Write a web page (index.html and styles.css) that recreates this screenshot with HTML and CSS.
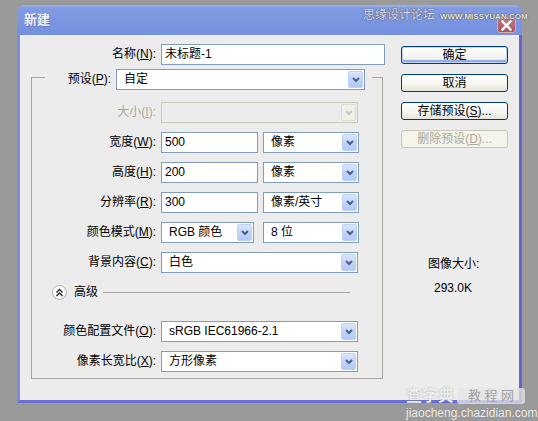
FILE: index.html
```html
<!DOCTYPE html>
<html lang="zh-CN">
<head>
<meta charset="utf-8">
<title>新建</title>
<link rel="stylesheet" href="styles.css">
</head>
<body>
<div class="window">
  <div class="titlebar">
    <span class="title">新建</span>
    <div class="close">
      <svg width="11" height="11" viewBox="0 0 11 11"><path d="M1.5 1.5 L9.5 9.5 M9.5 1.5 L1.5 9.5" stroke="#fff" stroke-width="2.4" stroke-linecap="square"/></svg>
    </div>
  </div>
  <div class="frame">
    <div class="left">
      <div class="row">
        <span class="lbl lbl-name">名称(<u>N</u>):</span>
        <div class="input w-name">未标题-1</div>
      </div>
      <div class="group">
        <div class="ghead">
          <div class="seg-l"></div>
          <span class="lbl lbl-preset">预设(<u>P</u>):</span>
          <div class="select w-preset"><span class="txt">自定</span><span class="arrow"><svg width="8" height="6" viewBox="0 0 8 6"><path d="M1 1 L4 4 L7 1" fill="none" stroke="#4d6185" stroke-width="2"/></svg></span></div>
          <div class="seg-r"></div>
        </div>
        <div class="gbody">
          <div class="grow">
            <span class="glbl disabled">大小(<u>I</u>):</span>
            <div class="select w-full off"><span class="txt"></span><span class="arrow"><svg width="8" height="6" viewBox="0 0 8 6"><path d="M1 1 L4 4 L7 1" fill="none" stroke="#c9c7ba" stroke-width="2"/></svg></span></div>
          </div>
          <div class="grow">
            <span class="glbl">宽度(<u>W</u>):</span>
            <div class="input w-num">500</div>
            <div class="select w-unit gap5"><span class="txt">像素</span><span class="arrow"><svg width="8" height="6" viewBox="0 0 8 6"><path d="M1 1 L4 4 L7 1" fill="none" stroke="#4d6185" stroke-width="2"/></svg></span></div>
          </div>
          <div class="grow">
            <span class="glbl">高度(<u>H</u>):</span>
            <div class="input w-num">200</div>
            <div class="select w-unit gap5"><span class="txt">像素</span><span class="arrow"><svg width="8" height="6" viewBox="0 0 8 6"><path d="M1 1 L4 4 L7 1" fill="none" stroke="#4d6185" stroke-width="2"/></svg></span></div>
          </div>
          <div class="grow">
            <span class="glbl">分辨率(<u>R</u>):</span>
            <div class="input w-num">300</div>
            <div class="select w-unit gap5"><span class="txt">像素/英寸</span><span class="arrow"><svg width="8" height="6" viewBox="0 0 8 6"><path d="M1 1 L4 4 L7 1" fill="none" stroke="#4d6185" stroke-width="2"/></svg></span></div>
          </div>
          <div class="grow">
            <span class="glbl">颜色模式(<u>M</u>):</span>
            <div class="select w-mode"><span class="txt">RGB 颜色</span><span class="arrow"><svg width="8" height="6" viewBox="0 0 8 6"><path d="M1 1 L4 4 L7 1" fill="none" stroke="#4d6185" stroke-width="2"/></svg></span></div>
            <div class="select w-unit gap9"><span class="txt">8 位</span><span class="arrow"><svg width="8" height="6" viewBox="0 0 8 6"><path d="M1 1 L4 4 L7 1" fill="none" stroke="#4d6185" stroke-width="2"/></svg></span></div>
          </div>
          <div class="grow">
            <span class="glbl">背景内容(<u>C</u>):</span>
            <div class="select w-full"><span class="txt">白色</span><span class="arrow"><svg width="8" height="6" viewBox="0 0 8 6"><path d="M1 1 L4 4 L7 1" fill="none" stroke="#4d6185" stroke-width="2"/></svg></span></div>
          </div>
          <div class="adv">
            <span class="circle"><svg width="9" height="9" viewBox="0 0 9 9"><path d="M1.5 4.5 L4.5 1.5 L7.5 4.5 M1.5 8 L4.5 5 L7.5 8" fill="none" stroke="#222" stroke-width="1.4"/></svg></span>
            <span class="advtxt">高级</span>
            <span class="advline"></span>
          </div>
          <div class="grow">
            <span class="glbl">颜色配置文件(<u>O</u>):</span>
            <div class="select w-full"><span class="txt">sRGB IEC61966-2.1</span><span class="arrow"><svg width="8" height="6" viewBox="0 0 8 6"><path d="M1 1 L4 4 L7 1" fill="none" stroke="#4d6185" stroke-width="2"/></svg></span></div>
          </div>
          <div class="grow last">
            <span class="glbl">像素长宽比(<u>X</u>):</span>
            <div class="select w-full"><span class="txt">方形像素</span><span class="arrow"><svg width="8" height="6" viewBox="0 0 8 6"><path d="M1 1 L4 4 L7 1" fill="none" stroke="#4d6185" stroke-width="2"/></svg></span></div>
          </div>
        </div>
      </div>
    </div>
    <div class="right">
      <div class="btn default">确定</div>
      <div class="btn">取消</div>
      <div class="btn">存储预设(<u>S</u>)...</div>
      <div class="btn disabled">删除预设(<u>D</u>)...</div>
      <div class="info1">图像大小:</div>
      <div class="info2">293.0K</div>
    </div>
  </div>
</div>
<div class="wm-top"><span class="wm-cn">思缘设计论坛</span><span class="wm-en">WWW.MISSYUAN.COM</span></div>
<div class="wm-bot">
  <div class="wm-line1"><span class="wm-czd">查字典</span><span class="wm-box">教 程 网</span></div>
  <div class="wm-url">jiaocheng.chazidian.com</div>
</div>
</body>
</html>
```

FILE: styles.css
```css
html, body {
  margin: 0;
  padding: 0;
}
body {
  width: 538px;
  height: 421px;
  overflow: hidden;
  position: relative;
  background: #9a9a9a;
  font-family: "Liberation Sans", "Noto Sans CJK SC", sans-serif;
  font-size: 12px;
  color: #000;
}
u { text-decoration: underline; text-underline-offset: 1px; }

.window {
  margin: 5px 0 0 17px;
  width: 505px;
  height: 398px;
  display: flex;
  flex-direction: column;
}
.titlebar {
  height: 30px;
  flex: none;
  border-radius: 8px 8px 0 0;
  background: linear-gradient(#9db2ef 0, #829be3 3px, #7a95e0 60%, #7590dd 100%);
  display: flex;
  align-items: flex-start;
}
.title {
  align-self: center;
  margin-left: 7px;
  color: #eaf0fc;
  font-weight: bold;
  font-size: 13px;
  line-height: 14px;
  text-shadow: 1px 1px 0 #6478c4;
}
.close {
  margin: 12px 6px 0 auto;
  width: 19px;
  height: 16px;
  box-sizing: border-box;
  border: 1px solid #d7a9b0;
  border-radius: 3px;
  background: linear-gradient(#c27a84, #a9545f);
  display: flex;
  align-items: center;
  justify-content: center;
}
.frame {
  flex: 1;
  display: flex;
  background: #ececec;
  border-left: 3px solid #7a8ce0;
  border-right: 3px solid #6464cc;
  border-bottom: 3px solid #6a6ed4;
}

.left {
  width: 365px;
  padding-top: 9px;
}
.row {
  display: flex;
  align-items: center;
  height: 21px;
}
.lbl {
  text-align: right;
  white-space: nowrap;
  line-height: 21px;
}
.lbl-name { width: 136px; margin-right: 5px; }

.input {
  height: 21px;
  box-sizing: border-box;
  border: 1px solid #7f9db9;
  background: #fff;
  padding-left: 3px;
  line-height: 19px;
  white-space: nowrap;
}
.w-name { width: 224px; }
.w-num { width: 97px; }

.select {
  height: 21px;
  box-sizing: border-box;
  border: 1px solid #7f9db9;
  background: #fff;
  display: flex;
  align-items: center;
  padding-left: 7px;
}
.select .txt {
  flex: 1;
  white-space: nowrap;
  line-height: 19px;
}
.select .arrow {
  width: 15px;
  height: 17px;
  margin-right: 1px;
  box-sizing: border-box;
  border: 1px solid #bdd0f9;
  border-radius: 2px;
  background: linear-gradient(#dbe6fe, #c2d4fb 50%, #b2c8f9);
  display: flex;
  align-items: center;
  justify-content: center;
}
.select.off {
  border-color: #c9c7ba;
  background: #ececec;
}
.select.off .arrow {
  border-color: #dedcd2;
  background: #f0efe8;
}
.w-preset { width: 249px; }
.w-full { width: 197px; }
.w-unit { width: 96px; }
.w-mode { width: 93px; }
.gap5 { margin-left: 5px; }
.gap9 { margin-left: 9px; }

.group {
  margin: 4px 0 0 11px;
  width: 352px;
}
.ghead {
  display: flex;
  align-items: flex-start;
  height: 21px;
}
.seg-l {
  width: 14px;
  box-sizing: border-box;
  align-self: stretch;
  margin-top: 8px;
  border-top: 1px solid #a8a8a0;
  border-left: 1px solid #a8a8a0;
}
.lbl-preset { width: 66px; margin-right: 5px; }
.seg-r {
  margin-left: 7px;
  flex: 1;
  box-sizing: border-box;
  align-self: stretch;
  margin-top: 8px;
  border-top: 1px solid #a8a8a0;
  border-right: 1px solid #a8a8a0;
}
.gbody {
  border: 1px solid #a8a8a0;
  border-top: 0;
  padding: 12px 0 6px 0;
}
.grow {
  display: flex;
  align-items: center;
  height: 21px;
  margin-bottom: 9px;
}
.grow.last { margin-bottom: 0; }
.glbl {
  width: 124px;
  margin-right: 5px;
  text-align: right;
  white-space: nowrap;
  line-height: 21px;
}
.disabled { color: #aca899; }

.adv {
  display: flex;
  align-items: center;
  height: 16px;
  margin: 11px 0 21px 0;
}
.circle {
  margin-left: 20px;
  width: 15px;
  height: 15px;
  box-sizing: border-box;
  border: 1px solid #b5b5ad;
  border-radius: 50%;
  background: radial-gradient(circle at 40% 35%, #ffffff 40%, #dcdcd6);
  display: flex;
  align-items: center;
  justify-content: center;
}
.advtxt { margin-left: 7px; line-height: 16px; }
.advline {
  margin-left: 5px;
  margin-right: 32px;
  flex: 1;
  height: 1px;
  background: #a8a8a0;
}

.right {
  margin-left: 16px;
  padding-top: 11px;
  width: 107px;
}
.btn {
  width: 107px;
  height: 18px;
  box-sizing: border-box;
  border: 1px solid #003c74;
  border-radius: 3px;
  background: linear-gradient(#ffffff, #f6f5f0 55%, #e6e4dc);
  text-align: center;
  line-height: 16px;
  margin-bottom: 10px;
  white-space: nowrap;
}
.btn.default {
  box-shadow: inset 0 0 0 1px #c4d4f4, inset 0 -2px 0 1px #8eaee8;
}
.btn.disabled {
  border-color: #c9c7ba;
  color: #aca899;
  background: #f5f4ea;
}
.info1 {
  margin: 108px 0 0 27px;
  line-height: 16px;
  white-space: nowrap;
}
.info2 {
  margin: 8px 0 0 33px;
  line-height: 16px;
}

.wm-top {
  position: absolute;
  left: 363px;
  top: 8px;
  display: flex;
  align-items: center;
  white-space: nowrap;
}
.wm-cn {
  font-size: 12px;
  line-height: 14px;
  color: #d6daf0;
  text-shadow: 0 0 1px #555, 0 0 1px #555;
}
.wm-en {
  margin-left: 5px;
  font-size: 8px;
  font-weight: bold;
  line-height: 10px;
  color: #e6e6e6;
  text-shadow: 0 0 1px #444, 0 0 1px #444;
  margin-top: 4px;
}
.wm-bot {
  position: absolute;
  left: 406px;
  top: 387px;
  white-space: nowrap;
}
.wm-line1 {
  display: flex;
  align-items: center;
  height: 18px;
}
.wm-czd {
  font-size: 16px;
  font-weight: bold;
  line-height: 18px;
  color: rgba(255,255,255,0.85);
  text-shadow: 0 0 1px #888;
}
.wm-box {
  margin-left: 3px;
  width: 68px;
  height: 16px;
  border-radius: 3px;
  background: rgba(230,230,230,0.75);
  color: #a0a0a0;
  font-size: 13px;
  line-height: 16px;
  text-align: center;
}
.wm-url {
  margin-top: 2px;
  font-size: 12px;
  line-height: 13px;
  color: #f2f2f2;
  text-shadow: 0 0 1px #777;
}
```
